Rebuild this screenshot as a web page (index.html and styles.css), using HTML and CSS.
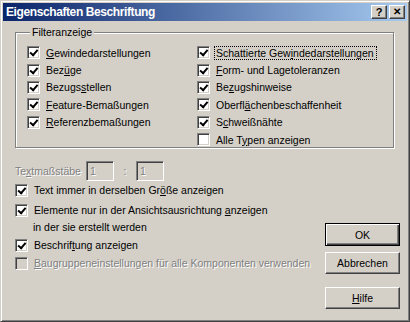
FILE: index.html
```html
<!DOCTYPE html>
<html lang="de">
<head>
    <meta charset="UTF-8">
    <title>Eigenschaften Beschriftung</title>
    <link rel="stylesheet" href="styles.css">
</head>
<body>

    <div class="dialog">
        <div class="titlebar">
            <span class="title">Eigenschaften Beschriftung</span>
            <div class="caption-buttons">
                <span class="cap-btn">?</span>
                <span class="cap-btn close">&#x2715;</span>
            </div>
        </div>

        <div class="content">
            <fieldset class="group">
                <legend>Filteranzeige</legend>
                <div class="filter-grid">
                    <div class="col">
                        <label class="check"><span class="box checked"></span><span><u>G</u>ewindedarstellungen</span></label>
                        <label class="check"><span class="box checked"></span><span>Bez<u>ü</u>ge</span></label>
                        <label class="check"><span class="box checked"></span><span>Bezugs<u>s</u>tellen</span></label>
                        <label class="check"><span class="box checked"></span><span><u>F</u>eature-Bemaßungen</span></label>
                        <label class="check"><span class="box checked"></span><span><u>R</u>eferenzbemaßungen</span></label>
                    </div>
                    <div class="col">
                        <label class="check"><span class="box checked"></span><span class="focus">Schattierte Gew<u>i</u>ndedarstellungen</span></label>
                        <label class="check"><span class="box checked"></span><span><u>F</u>orm- und Lagetoleranzen</span></label>
                        <label class="check"><span class="box checked"></span><span>Be<u>z</u>ugshinweise</span></label>
                        <label class="check"><span class="box checked"></span><span>Oberfl<u>ä</u>chenbeschaffenheit</span></label>
                        <label class="check"><span class="box checked"></span><span>S<u>c</u>hweißnähte</span></label>
                        <label class="check"><span class="box"></span><span>Alle T<u>y</u>pen anzeigen</span></label>
                    </div>
                </div>
            </fieldset>

            <div class="lower">
                <div class="options">
                    <div class="scale-row">
                        <span class="disabled-text scale-label">Te<u>x</u>tmaßstäbe</span>
                        <span class="field">1</span>
                        <span class="disabled-text colon">:</span>
                        <span class="field">1</span>
                    </div>
                    <label class="check first"><span class="box checked"></span><span>Text immer in derselben Gr<u>ö</u>ße anzeigen</span></label>
                    <label class="check"><span class="box checked"></span><span>Elemente nur in der Ansichtsausrichtung <u>a</u>nzeigen</span></label>
                    <div class="continued">in der sie erstellt werden</div>
                    <label class="check"><span class="box checked"></span><span>Beschrif<u>t</u>ung anzeigen</span></label>
                    <label class="check disabled"><span class="box"></span><span class="disabled-text"><u>B</u>augruppeneinstellungen für alle Komponenten verwenden</span></label>
                </div>

                <div class="buttons">
                    <span class="button default">OK</span>
                    <span class="button">Abbrechen</span>
                    <span class="button help"><u>H</u>ilfe</span>
                </div>
            </div>
        </div>
    </div>

</body>
</html>
```

FILE: styles.css
```css
body {
    margin: 0;
    padding: 0;
    background-color: #d4d0c8;
    font-family: "Liberation Sans", Arial, sans-serif;
    font-size: 10.5px;
    color: #000;
}

.dialog {
    width: 410px;
    height: 322px;
    box-sizing: border-box;
    background-color: #d4d0c8;
    border-top: 1px solid #d4d0c8;
    border-left: 1px solid #d4d0c8;
    border-right: 1px solid #404040;
    border-bottom: 1px solid #404040;
    box-shadow: inset 1px 1px 0 #fff, inset -1px -1px 0 #808080;
    padding: 2px;
    display: flex;
    flex-direction: column;
}

.titlebar {
    height: 18px;
    background: linear-gradient(to right, #0a246a, #a6caf0);
    display: flex;
    align-items: center;
    justify-content: space-between;
    padding: 0 2px 0 3px;
}

.title {
    color: #fff;
    font-weight: bold;
    font-size: 12px;
    letter-spacing: -0.4px;
}

.caption-buttons {
    display: flex;
    gap: 2px;
}

.cap-btn {
    width: 16px;
    height: 14px;
    box-sizing: border-box;
    background-color: #d4d0c8;
    border-top: 1px solid #fff;
    border-left: 1px solid #fff;
    border-right: 1px solid #404040;
    border-bottom: 1px solid #404040;
    box-shadow: inset -1px -1px 0 #808080;
    font-weight: bold;
    font-size: 11px;
    line-height: 12px;
    text-align: center;
}

.cap-btn.close {
    font-size: 10px;
}

.content {
    flex: 1;
    padding: 5px 7px 0 12px;
    display: flex;
    flex-direction: column;
}

.group {
    margin: 0 6px 0 0;
    padding: 6px 0 0 11px;
    border: 1px solid #808080;
    box-shadow: inset 1px 1px 0 #fff, 1px 1px 0 #fff;
    height: 122px;
    box-sizing: border-box;
}

.group legend {
    padding: 0 2px;
    margin-left: 3px;
    background-color: #d4d0c8;
}

.filter-grid {
    display: grid;
    grid-template-columns: 170px 1fr;
}

.col {
    display: flex;
    flex-direction: column;
}

.check {
    display: flex;
    align-items: center;
    height: 17.4px;
    white-space: nowrap;
}

.box {
    width: 13px;
    height: 13px;
    box-sizing: border-box;
    margin-right: 6px;
    background-color: #fff;
    border-top: 1px solid #808080;
    border-left: 1px solid #808080;
    border-right: 1px solid #fff;
    border-bottom: 1px solid #fff;
    box-shadow: inset 1px 1px 0 #404040, inset -1px -1px 0 #d4d0c8;
    position: relative;
    flex-shrink: 0;
}

.box.checked::after {
    content: "";
    position: absolute;
    left: 2px;
    top: 1px;
    width: 3px;
    height: 6px;
    border-right: 2px solid #000;
    border-bottom: 2px solid #000;
    transform: rotate(40deg) translate(1px, -1px);
}

.check.disabled .box {
    background-color: #d4d0c8;
}

.focus {
    outline: 1px dotted #000;
    outline-offset: 0;
    padding: 0 2px 0 1px;
    margin-left: -1px;
}

.lower {
    flex: 1;
    display: flex;
    justify-content: space-between;
}

.options {
    display: flex;
    flex-direction: column;
    padding-top: 13px;
}

.options .check {
    height: 18px;
}

.options .check.first {
    margin-bottom: 2px;
}

.scale-row {
    display: flex;
    align-items: center;
    height: 20px;
    margin-bottom: 0;
}

.disabled-text {
    color: #808080;
    text-shadow: 1px 1px 0 #fff;
}

.scale-label {
    width: 71px;
}

.colon {
    width: 22px;
    text-align: center;
}

.field {
    width: 28px;
    height: 20px;
    box-sizing: border-box;
    border-top: 1px solid #808080;
    border-left: 1px solid #808080;
    border-right: 1px solid #fff;
    border-bottom: 1px solid #fff;
    box-shadow: inset 1px 1px 0 #404040, inset -1px -1px 0 #d4d0c8;
    color: #808080;
    text-shadow: 1px 1px 0 #fff;
    padding: 3px 3px;
    line-height: 13px;
}

.continued {
    height: 17px;
    line-height: 17px;
    padding-left: 18px;
}

.buttons {
    display: flex;
    flex-direction: column;
    justify-content: flex-end;
    gap: 6px;
    padding-bottom: 10px;
}

.button {
    width: 75px;
    height: 22px;
    box-sizing: border-box;
    display: flex;
    align-items: center;
    justify-content: center;
    border-top: 1px solid #fff;
    border-left: 1px solid #fff;
    border-right: 1px solid #404040;
    border-bottom: 1px solid #404040;
    box-shadow: inset -1px -1px 0 #808080;
}

.button.default {
    height: 23px;
    border: 1px solid #000;
    box-shadow: inset 1px 1px 0 #fff, inset -1px -1px 0 #404040, inset -2px -2px 0 #808080;
}

.button.help {
    margin-top: 7px;
}
```
